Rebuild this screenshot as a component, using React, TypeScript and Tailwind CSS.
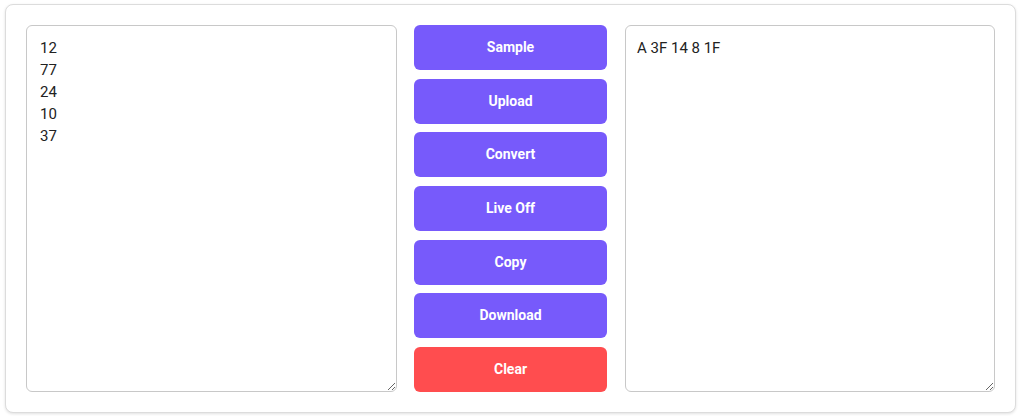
import { useState } from 'react'

// Buttons shown in the middle column, top to bottom
const ACTIONS = ['Sample', 'Upload', 'Convert', 'Live Off', 'Copy', 'Download']

export default function App() {
  const [input, setInput] = useState('12\n77\n24\n10\n37')
  const [output, setOutput] = useState('A 3F 14 8 1F')

  return (
    <div className="h-[416px] w-[1024px] bg-white pl-[5px] pt-[4px] font-['Roboto',sans-serif]">
      <div className="grid h-[409px] w-[1011px] grid-cols-[371px_193px_371px] gap-x-[17px] rounded-lg border border-[#dcdcdc] bg-white p-[20px] shadow-[0_1px_3px_rgba(0,0,0,0.12)]">
        <textarea
          value={input}
          onChange={(e) => setInput(e.target.value)}
          className="h-[367px] rounded-md border border-[#c8c8c8] bg-white px-[13px] py-[11px] text-[15px] leading-[22px] text-[#222] outline-none"
        />

        <div className="flex flex-col gap-[8.7px]">
          {ACTIONS.map((label) => (
            <button
              key={label}
              type="button"
              className="h-[45px] rounded-md bg-[#775afb] text-[14px] font-bold text-white"
            >
              {label}
            </button>
          ))}
          <button
            type="button"
            onClick={() => {
              setInput('')
              setOutput('')
            }}
            className="h-[45px] rounded-md bg-[#ff4d4f] text-[14px] font-bold text-white"
          >
            Clear
          </button>
        </div>

        <textarea
          value={output}
          readOnly
          className="ml-px h-[367px] rounded-md border border-[#c8c8c8] bg-white px-[11px] py-[11px] text-[15px] leading-[22px] text-[#222] outline-none"
        />
      </div>
    </div>
  )
}
